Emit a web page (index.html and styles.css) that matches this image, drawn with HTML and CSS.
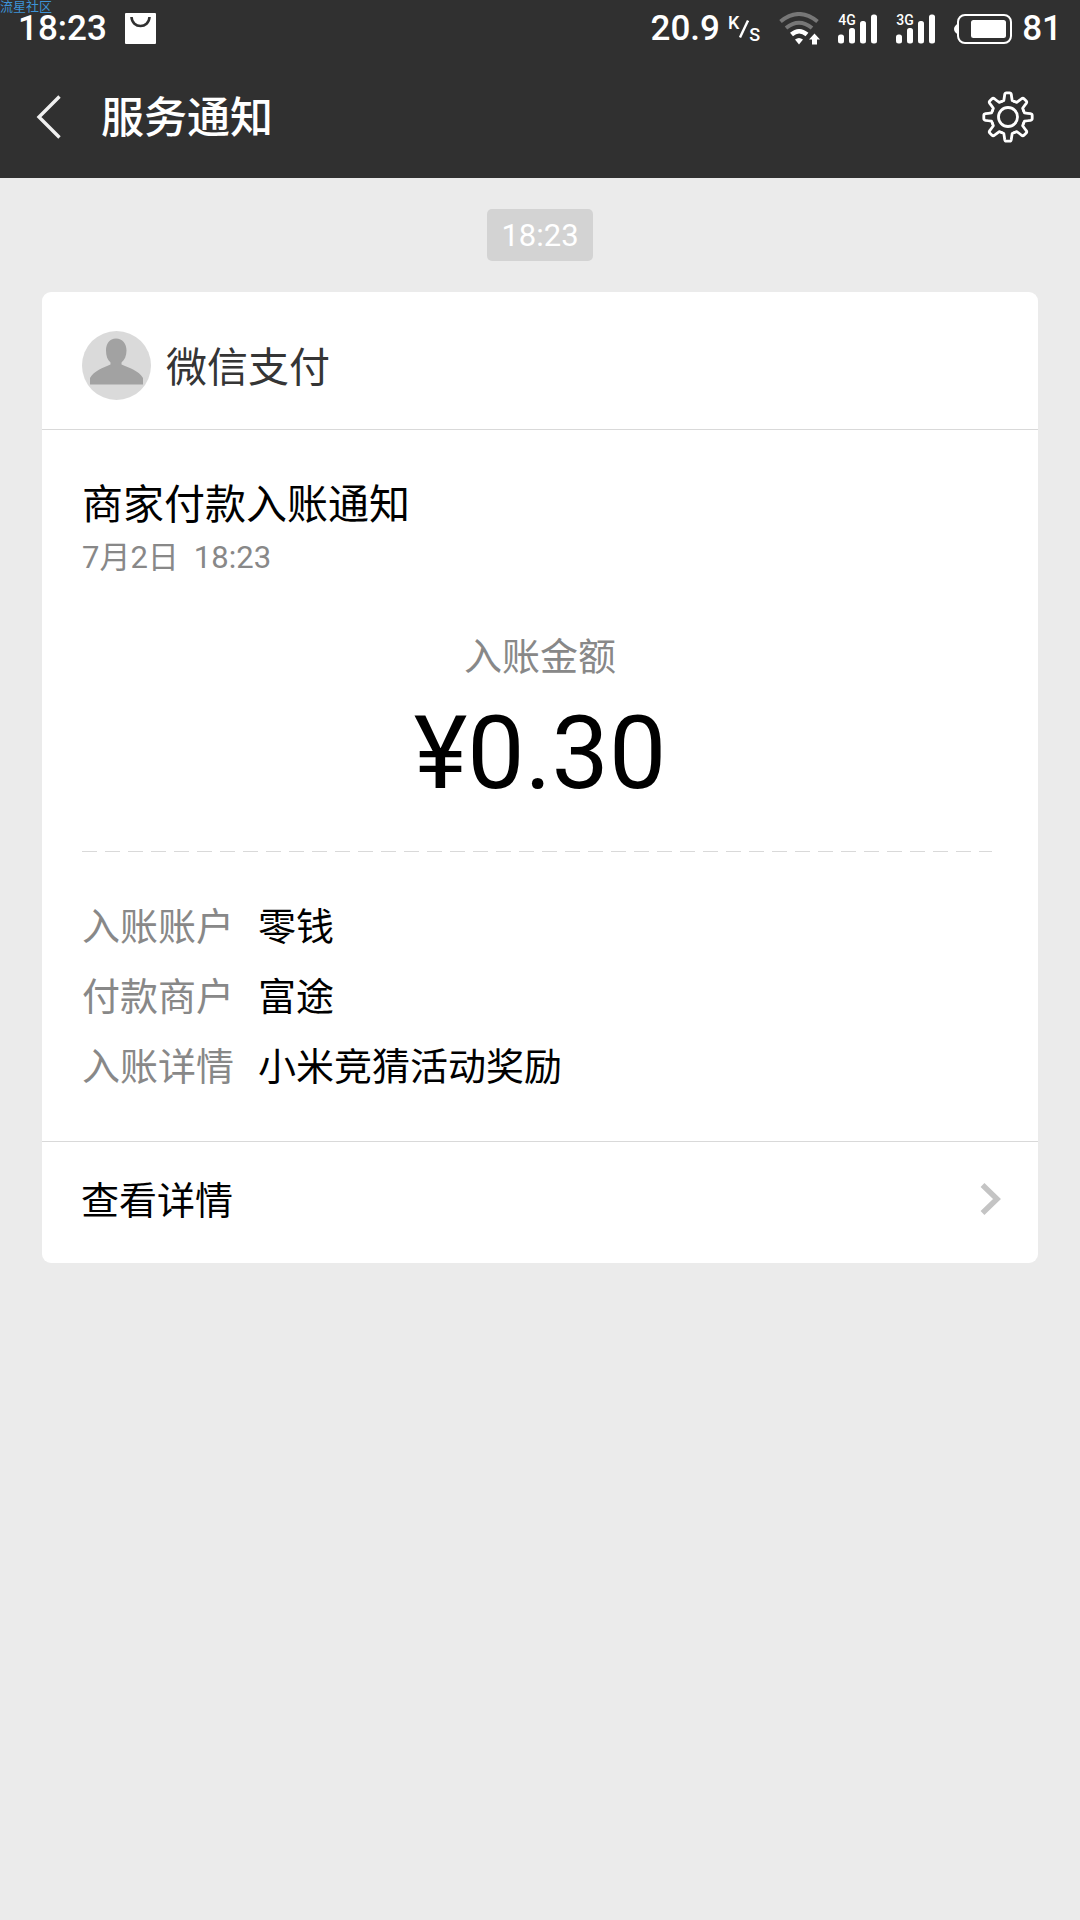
FILE: index.html
```html
<!DOCTYPE html>
<html lang="zh-CN">
<head>
<meta charset="utf-8">
<meta name="viewport" content="width=device-width, initial-scale=1">
<title>服务通知</title>
<link rel="stylesheet" href="styles.css">
</head>
<body>
<header class="top">
  <span class="watermark">流星社区</span>
  <div class="status">
    <span class="status-time">18:23</span>
    <svg class="bag" width="31" height="31" viewBox="0 0 31 31" aria-hidden="true">
      <rect width="31" height="31" rx="1" fill="#fff"/>
      <path d="M6.500 4C7 16 24 16 24.500 4" fill="none" stroke="#303030" stroke-width="2.600"/>
    </svg>
    <div class="status-right">
      <span class="speed">20.9</span>
      <span class="unit"><span class="unit-top">K</span><svg width="10" height="18" viewBox="0 0 10 18" aria-hidden="true"><path d="M1 17.500 9 .5" stroke="#fff" stroke-width="2.400"/></svg><span class="unit-bottom">S</span></span>
      <svg class="wifi" width="41" height="33" viewBox="0 0 41 33" fill="none" aria-hidden="true">
        <path d="M1.500 9.500Q20 -5.500 38.500 9.500" stroke="#777" stroke-width="4"/>
        <path d="M7 16Q20 5.500 33 16" stroke="#777" stroke-width="4"/>
        <path d="M12.500 22.500Q20 16 28 22.500" stroke="#fff" stroke-width="4.500"/>
        <path d="M16 27.500Q20 24.500 24 27.500L20 32.500Z" fill="#fff"/>
        <path d="M35.500 21.500 41 27.500H38V32.500H33V27.500H30Z" fill="#fff"/>
      </svg>
      <span class="signal">
        <svg width="40" height="30" viewBox="0 0 40 30" fill="#fff" aria-hidden="true"><rect y="20.500" width="6" height="9" rx="2.500"/><rect x="11" y="14" width="6" height="15.500" rx="2.500"/><rect x="22" y="7" width="6" height="22.500" rx="2.500"/><rect x="33" y="0.500" width="6" height="29" rx="2.500"/></svg>
        <span class="network">4G</span>
      </span>
      <span class="signal">
        <svg width="40" height="30" viewBox="0 0 40 30" fill="#fff" aria-hidden="true"><rect y="20.500" width="6" height="9" rx="2.500"/><rect x="11" y="14" width="6" height="15.500" rx="2.500"/><rect x="22" y="7" width="6" height="22.500" rx="2.500"/><rect x="33" y="0.500" width="6" height="29" rx="2.500"/></svg>
        <span class="network">3G</span>
      </span>
      <svg class="battery" width="58" height="30" viewBox="0 0 58 30" aria-hidden="true">
        <rect x="4" y="1" width="53" height="28" rx="7" fill="none" stroke="#fff" stroke-width="2"/>
        <path d="M4 9.500Q0 12 0 15T4 20.500Z" fill="#fff"/>
        <rect x="17" y="6" width="35" height="18" rx="2.500" fill="#fff"/>
      </svg>
      <span class="level">81</span>
    </div>
  </div>
  <nav class="nav">
    <button class="icon-button" type="button" aria-label="返回">
      <svg width="26" height="44" viewBox="0 0 26 44" fill="none" stroke="#f0f0f0" stroke-width="3.400" aria-hidden="true"><path d="M23.500 1.500 3 22 23.500 42.500"/></svg>
    </button>
    <h1 class="page-title">服务通知</h1>
    <button class="icon-button settings" type="button" aria-label="设置">
      <svg width="52" height="52" viewBox="-26 -26 52 52" fill="none" stroke="#fff" stroke-width="2.800" stroke-linecap="round" stroke-linejoin="round" aria-hidden="true">
        <defs><path id="tooth" d="M-6.400 -15.500 -4.200 -16.500Q-3.600 -20 -3.300 -22.500 -3 -24.200 -1.600 -24.200H1.600Q3 -24.200 3.300 -22.500 3.600 -20 4.200 -16.500L6.400 -15.500"/></defs>
        <circle r="9.500"/>
        <use href="#tooth"/><use href="#tooth" transform="rotate(45)"/><use href="#tooth" transform="rotate(90)"/><use href="#tooth" transform="rotate(135)"/><use href="#tooth" transform="rotate(180)"/><use href="#tooth" transform="rotate(225)"/><use href="#tooth" transform="rotate(270)"/><use href="#tooth" transform="rotate(315)"/>
      </svg>
    </button>
  </nav>
</header>
<main class="feed">
  <time class="stamp">18:23</time>
  <article class="card">
    <header class="sender">
      <svg width="69" height="69" viewBox="0 0 69 69" aria-hidden="true">
        <circle cx="34.500" cy="34.500" r="34.500" fill="#dadada"/>
        <path d="M34 7.500C40.500 7.500 44.500 12.500 44.500 19.500 44.500 25 42.500 29 39.500 31.500V33.500C47 36.500 57 40 61 47V53.500H8V47C12 40 21 36.500 28.500 33.500V31.500C25.500 29 24 25 24 19.500 24 12.500 27.500 7.500 34 7.500Z" fill="#a2a2a2"/>
      </svg>
      <span class="sender-name">微信支付</span>
    </header>
    <div class="content">
      <h2 class="title">商家付款入账通知</h2>
      <p class="date"><span>7月2日</span><span>18:23</span></p>
      <p class="amount-label">入账金额</p>
      <p class="amount">¥0.30</p>
      <div class="dashes"></div>
      <dl class="details">
        <dt>入账账户</dt><dd>零钱</dd>
        <dt>付款商户</dt><dd>富途</dd>
        <dt>入账详情</dt><dd>小米竞猜活动奖励</dd>
      </dl>
    </div>
    <a class="more" href="#">
      <span>查看详情</span>
      <svg width="22" height="32" viewBox="0 0 22 32" fill="none" stroke="#c4c4c4" stroke-width="5.500" aria-hidden="true"><path d="M2.500 2 17 16 2.500 30"/></svg>
    </a>
  </article>
</main>
</body>
</html>
```
FILE: styles.css
```css
* { box-sizing: border-box; }

body {
  margin: 0;
  min-height: 100vh;
  background: #ebebeb;
  color: #000;
  font-family: Roboto, "Noto Sans CJK SC", sans-serif;
}

h1, h2, p, dl, dd { margin: 0; font-weight: 400; }

/* Dark top area */
.top {
  position: relative;
  background: #303030;
  color: #fff;
}

.watermark {
  position: absolute;
  top: 0;
  left: 0;
  color: #3d93d6;
  font-size: 13px;
  line-height: 13px;
}

.status {
  display: flex;
  align-items: center;
  height: 56px;
  padding: 1px 18px 0;
  font-size: 35px;
  font-weight: 500;
  line-height: 40px;
}

.bag { margin-left: 18px; }

.status-right {
  display: flex;
  align-items: center;
  margin-left: auto;
}

.unit {
  display: flex;
  align-items: center;
  height: 28px;
  margin-left: 8px;
  font-size: 18px;
  line-height: 16px;
}

.unit-top { align-self: flex-start; }
.unit-bottom { align-self: flex-end; }
.wifi { margin-left: 19px; }

.signal {
  position: relative;
  display: flex;
  margin-left: 18px;
}

.network {
  position: absolute;
  top: 0;
  left: 0;
  font-size: 14px;
  line-height: 12px;
}

.battery { margin: 0 10px 0 18px; }

.nav {
  display: flex;
  align-items: center;
  height: 122px;
  padding: 0 46px 0 36px;
}

.icon-button {
  display: flex;
  padding: 0;
  border: 0;
  background: none;
}

.settings { margin-left: auto; }

.page-title {
  margin-left: 39px;
  padding-top: 2px;
  font-size: 43px;
  font-weight: 500;
  line-height: 60px;
}

/* Message feed */
.feed {
  display: flex;
  flex-direction: column;
  align-items: center;
  gap: 31px;
  padding: 31px 42px;
}

.stamp {
  padding: 2px 14px 0;
  border-radius: 5px;
  background: #d3d3d3;
  color: #fff;
  font-size: 31px;
  line-height: 50px;
}

.card {
  width: 100%;
  border-radius: 9px;
  background: #fff;
}

.sender {
  display: flex;
  align-items: center;
  gap: 15px;
  height: 138px;
  padding: 10px 40px 0;
  border-bottom: 1px solid #d9d9d9;
}

.sender-name {
  padding-top: 4px;
  color: #353535;
  font-size: 41px;
  line-height: 52px;
}

.content { padding: 49px 40px 39px; }

.title {
  font-size: 41px;
  line-height: 52px;
}

.date {
  display: flex;
  gap: 15px;
  margin-top: 5px;
  color: #888;
  font-size: 31px;
  line-height: 44px;
}

.amount-label {
  margin-top: 51px;
  color: #888;
  font-size: 38px;
  line-height: 52px;
  text-align: center;
}

.amount {
  margin-top: 10px;
  font-size: 102px;
  line-height: 120px;
  text-align: center;
}

.dashes {
  height: 1px;
  margin: 38px 6px 40px 0;
  background: repeating-linear-gradient(90deg, #d9d9d9 0 15px, transparent 15px 23px);
}

.details {
  display: grid;
  grid-template-columns: auto 1fr;
  column-gap: 24px;
  font-size: 38px;
  line-height: 70px;
}

.details dt { color: #888; }

.more {
  display: flex;
  align-items: center;
  justify-content: space-between;
  height: 122px;
  padding: 0 36px 8px 39px;
  border-top: 1px solid #d9d9d9;
  color: #000;
  font-size: 38px;
  line-height: 52px;
  text-decoration: none;
}

.more span { padding-top: 4px; }
```
